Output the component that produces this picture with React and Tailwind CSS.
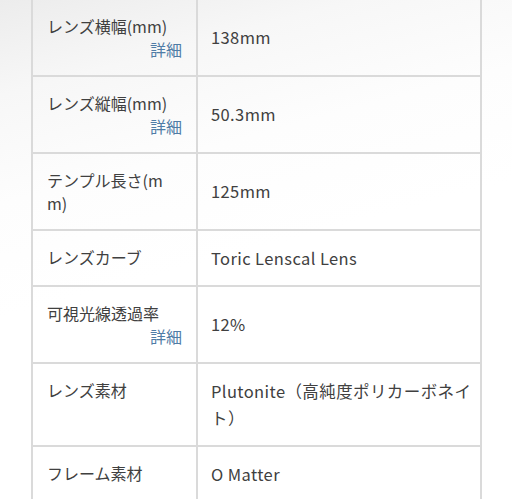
import React from "react";

const rows = [
  { label: "レンズ横幅(mm)", detail: true, value: "138mm" },
  { label: "レンズ縦幅(mm)", detail: true, value: "50.3mm" },
  { label: "テンプル長さ(mm)", detail: false, value: "125mm" },
  { label: "レンズカーブ", detail: false, value: "Toric Lenscal Lens" },
  { label: "可視光線透過率", detail: true, value: "12%" },
  { label: "レンズ素材", detail: false, value: "Plutonite（高純度ポリカーボネイト）" },
  { label: "フレーム素材", detail: false, value: "O Matter" },
];

export default function App() {
  return (
    <div
      className="w-[512px] h-[499px] overflow-hidden bg-[linear-gradient(165deg,#ececec_0%,#f7f7f7_15%,#fdfdfd_32%,#ffffff_50%)] text-[#404040]"
      style={{ fontFamily: '"Noto Sans CJK JP", "Noto Sans", sans-serif' }}
    >
      <table className="ml-[31px] mt-[-2px] w-[451px] border-collapse table-fixed">
        <colgroup>
          <col className="w-[165px]" />
          <col />
        </colgroup>
        <tbody>
          {rows.map((r, i) => (
            <tr key={i}>
              <th className="border-2 border-[#dadada] align-top text-left font-normal pl-[14px] pr-[14px] pt-[15px] pb-[14px] text-[16px] leading-[23px] break-all">
                <div>{r.label}</div>
                {r.detail && (
                  <div className="text-right text-[#4f7ca6]">詳細</div>
                )}
              </th>
              <td className="border-2 border-[#dadada] align-middle pl-[13px] pr-[6px] py-[13.5px] text-[16.5px] leading-[27px] tracking-[0.4px]">
                {r.value}
              </td>
            </tr>
          ))}
        </tbody>
      </table>
    </div>
  );
}
